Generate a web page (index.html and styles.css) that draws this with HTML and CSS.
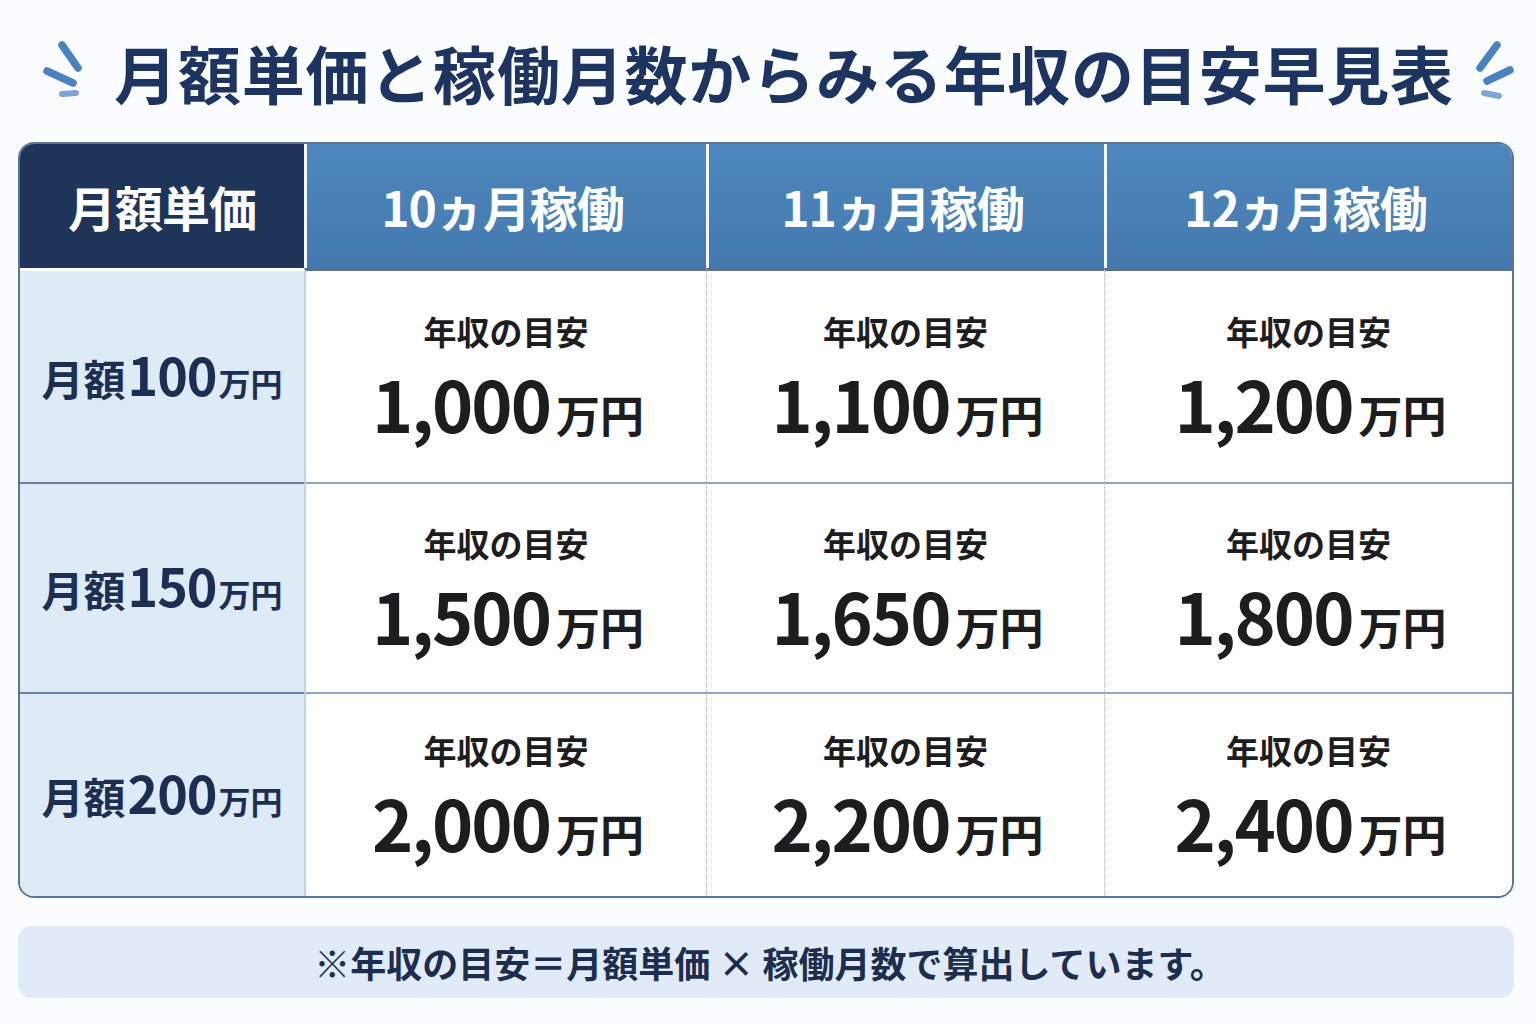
FILE: index.html
```html
<!DOCTYPE html>
<html lang="ja">
<head>
<meta charset="utf-8">
<title>月額単価と稼働月数からみる年収の目安早見表</title>
<link rel="stylesheet" href="styles.css">
</head>
<body>
<main class="page">
  <h1 class="title">
    <svg class="spark spark-l" width="46" height="64" viewBox="0 0 46 64" aria-hidden="true">
      <line x1="22" y1="8" x2="38" y2="31"/>
      <line x1="7" y1="34" x2="33" y2="46"/>
      <line class="faint" x1="22" y1="57" x2="36" y2="56"/>
    </svg>
    <span class="title-text">月額単価と稼働月数からみる年収の目安早見表</span>
    <svg class="spark spark-r" width="46" height="64" viewBox="0 0 46 64" aria-hidden="true">
      <line x1="23" y1="8" x2="6" y2="31"/>
      <line x1="36" y1="33" x2="13" y2="44"/>
      <line class="faint" x1="10" y1="56" x2="25" y2="59"/>
    </svg>
  </h1>

  <div class="table">
    <div class="th th-corner">月額単価</div>
    <div class="th th-col">10ヵ月稼働</div>
    <div class="th th-col">11ヵ月稼働</div>
    <div class="th th-col">12ヵ月稼働</div>

    <div class="rh r1"><span class="rh-a">月額</span><span class="rh-n">100</span><span class="rh-u">万円</span></div>
    <div class="td r1 c1"><span class="lbl">年収の目安</span><span class="val"><span class="num">1,000</span><span class="unit">万円</span></span></div>
    <div class="td r1"><span class="lbl">年収の目安</span><span class="val"><span class="num">1,100</span><span class="unit">万円</span></span></div>
    <div class="td r1"><span class="lbl">年収の目安</span><span class="val"><span class="num">1,200</span><span class="unit">万円</span></span></div>

    <div class="rh r2"><span class="rh-a">月額</span><span class="rh-n">150</span><span class="rh-u">万円</span></div>
    <div class="td r2 c1"><span class="lbl">年収の目安</span><span class="val"><span class="num">1,500</span><span class="unit">万円</span></span></div>
    <div class="td r2"><span class="lbl">年収の目安</span><span class="val"><span class="num">1,650</span><span class="unit">万円</span></span></div>
    <div class="td r2"><span class="lbl">年収の目安</span><span class="val"><span class="num">1,800</span><span class="unit">万円</span></span></div>

    <div class="rh r3"><span class="rh-a">月額</span><span class="rh-n">200</span><span class="rh-u">万円</span></div>
    <div class="td r3 c1"><span class="lbl">年収の目安</span><span class="val"><span class="num">2,000</span><span class="unit">万円</span></span></div>
    <div class="td r3"><span class="lbl">年収の目安</span><span class="val"><span class="num">2,200</span><span class="unit">万円</span></span></div>
    <div class="td r3"><span class="lbl">年収の目安</span><span class="val"><span class="num">2,400</span><span class="unit">万円</span></span></div>
  </div>

  <p class="note">※年収の目安＝月額単価 × 稼働月数で算出しています。</p>
</main>
</body>
</html>
```

FILE: styles.css
```css
* { box-sizing: border-box; }

html, body {
  margin: 0;
  padding: 0;
  background: #fbfcfe;
}

body {
  font-family: "Noto Sans CJK JP", "Noto Sans", sans-serif;
  color: #1c2f52;
}

.page {
  width: 1536px;
  height: 1024px;
  padding-left: 18px;
}

/* Title */
.title {
  margin: 0;
  width: 1496px;
  height: 142px;
  padding-top: 0;
  padding-left: 28px;
  display: flex;
  align-items: center;
  justify-content: center;
  gap: 20px;
  font-size: 63px;
  font-weight: 700;
  line-height: 1;
  color: #1d3461;
  letter-spacing: 0.8px;
  white-space: nowrap;
}

.title-text {
  flex: none;
}

.spark {
  flex: none;
  margin-bottom: 4px;
}
.spark-l {
  margin-right: 8px;
}
.spark line {
  stroke: #4a82c0;
  stroke-width: 7.5;
  stroke-linecap: round;
}
.spark line.faint {
  stroke: #7ea6d4;
  stroke-width: 6;
}

/* Table */
.table {
  width: 1496px;
  display: grid;
  grid-template-columns: 284px 402px 398px 408px;
  grid-template-rows: 124px 214px 210px 204px;
  border: 2px solid #5a7697;
  border-radius: 16px;
  overflow: hidden;
  background: #fff;
}

.th {
  display: flex;
  align-items: center;
  justify-content: center;
  color: #fff;
  font-size: 48px;
  font-weight: 700;
  line-height: 1;
  letter-spacing: -1px;
}
.th-corner {
  background: #1f3459;
}
.th-col {
  background: linear-gradient(#4d87bd, #4579ae);
  border-left: 3px solid #f4f8fc;
  padding-right: 8px;
}

/* Row header */
.rh {
  display: flex;
  align-items: baseline;
  justify-content: center;
  align-content: center;
  flex-wrap: wrap;
  background: #deeaf6;
  color: #1c2f52;
  font-weight: 700;
  line-height: 1;
  padding-bottom: 6px;
}
.rh-a { font-size: 42px; }
.rh-n { font-size: 52px; letter-spacing: -1px; margin-left: 2px; }
.rh-u { font-size: 32px; margin-left: 2px; }

.rh.r1 { border-top: 3px solid #ffffff; }
.rh.r2, .rh.r3 { border-top: 2px solid #6384aa; }

/* Data cells */
.td {
  display: flex;
  flex-direction: column;
  align-items: center;
  justify-content: center;
  gap: 20px;
  background: #fefefe;
  border-left: 1px dotted #aab6c6;
  color: #1d1d1f;
}
.td.c1 { border-left: 2px solid #c4d4e6; }
.td.r1 { border-top: 3px solid #52719a; }
.td.r2, .td.r3 { border-top: 2px solid #93a6bd; }

.lbl {
  font-size: 33px;
  font-weight: 700;
  line-height: 1;
}
.val {
  display: flex;
  align-items: baseline;
  line-height: 1;
  font-weight: 700;
  padding-left: 4px;
}
.num {
  font-size: 70px;
  letter-spacing: -2px;
}
.unit {
  font-size: 44px;
  margin-left: 6px;
}

/* Note */
.note {
  margin: 28px 0 0;
  width: 1496px;
  height: 72px;
  border-radius: 14px;
  background: #e1ebf7;
  display: flex;
  align-items: center;
  justify-content: center;
  font-size: 36px;
  font-weight: 700;
  color: #1c2d4e;
  line-height: 1;
  padding-left: 8px;
}
```
